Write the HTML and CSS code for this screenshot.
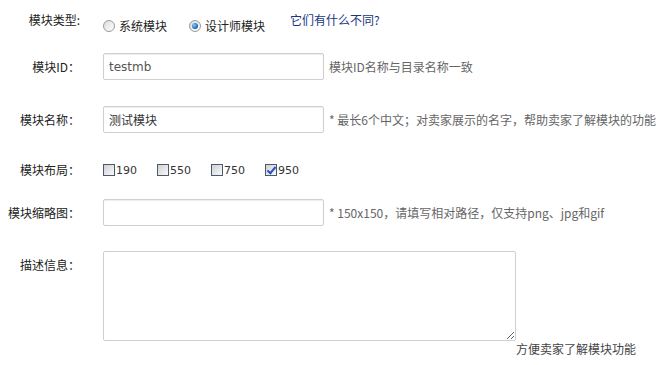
FILE: index.html
```html
<!DOCTYPE html>
<html lang="zh-CN">
<head>
    <meta charset="UTF-8">
    <title>模块信息</title>
    <link rel="stylesheet" href="styles.css">
</head>
<body>
    <form class="module-form">
        <!-- 模块类型 -->
        <div class="row row-type">
            <label class="field-label">模块类型:</label>
            <div class="options">
                <label class="radio"><input type="radio" name="type">系统模块</label>
                <label class="radio"><input type="radio" name="type" checked>设计师模块</label>
            </div>
            <a class="diff-link" href="#">它们有什么不同?</a>
        </div>

        <div class="row row-id">
            <label class="field-label">模块ID：</label>
            <input class="text-input latin" type="text" value="testmb">
            <span class="hint">模块ID名称与目录名称一致</span>
        </div>

        <div class="row row-name">
            <label class="field-label">模块名称：</label>
            <input class="text-input" type="text" value="测试模块">
            <span class="hint">* 最长6个中文；对卖家展示的名字，帮助卖家了解模块的功能</span>
        </div>

        <!-- 布局宽度 -->
        <div class="row row-layout">
            <label class="field-label">模块布局：</label>
            <div class="checks">
                <label class="check"><input type="checkbox">190</label>
                <label class="check"><input type="checkbox">550</label>
                <label class="check"><input type="checkbox">750</label>
                <label class="check"><input type="checkbox" checked>950</label>
            </div>
        </div>

        <div class="row row-thumb">
            <label class="field-label">模块缩略图：</label>
            <input class="text-input" type="text">
            <span class="hint">* 150x150，请填写相对路径，仅支持png、jpg和gif</span>
        </div>

        <div class="row row-desc">
            <label class="field-label">描述信息：</label>
            <div class="desc-box">
                <textarea class="desc-input"></textarea>
                <div class="desc-hint">方便卖家了解模块功能</div>
            </div>
        </div>
    </form>
</body>
</html>
```

FILE: styles.css
```css
body {
    margin: 0;
    background: #fff;
    color: #222;
    font-family: "Noto Sans CJK SC", "DejaVu Sans", sans-serif;
    font-size: 12px;
    overflow: hidden;
    width: 670px;
}
.module-form {
    padding-top: 12px;
}
.row {
    display: flex;
    align-items: center;
    white-space: nowrap;
}
.field-label {
    width: 80px;
    margin-right: 23px;
    text-align: right;
    line-height: 16px;
    flex-shrink: 0;
}

/* 模块类型 */
.row-type {
    align-items: flex-start;
    height: 28px;
}
.options {
    display: flex;
    margin-top: 6px;
    line-height: 16px;
}
.radio {
    display: flex;
    align-items: center;
    margin-right: 22px;
    font-size: 12px;
}
.radio input {
    appearance: none;
    width: 12px;
    height: 12px;
    margin: 0 4px 0 0;
    border: 1px solid #9a9a9a;
    border-radius: 50%;
    background: linear-gradient(135deg, #dcdcdc, #fff);
    position: relative;
}
.radio input:checked::after {
    content: "";
    position: absolute;
    left: 2px;
    top: 2px;
    width: 6px;
    height: 6px;
    border-radius: 50%;
    background: radial-gradient(circle at 35% 35%, #7fd0ff, #1a5cb0 70%);
}
.diff-link {
    margin-left: 3px;
    line-height: 16px;
    color: #17367f;
    text-decoration: none;
}

/* 输入框 */
.text-input {
    width: 221px;
    height: 27px;
    box-sizing: border-box;
    margin: 0;
    padding: 0 5px;
    border: 1px solid #cfcfcf;
    border-radius: 2px;
    box-shadow: inset 0 1px 1px #eee;
    font-family: "Noto Sans CJK SC", sans-serif;
    font-size: 12px;
    color: #333;
}
.text-input.latin {
    font-family: "DejaVu Sans", sans-serif;
    color: #555;
}
.hint {
    margin-left: 5px;
    color: #666;
}
.row-id {
    margin-top: 13px;
}
.row-name {
    margin-top: 26px;
}

/* 布局 */
.row-layout {
    margin-top: 26px;
    height: 22px;
}
.checks {
    display: flex;
}
.check {
    display: flex;
    align-items: center;
    width: 54px;
    font-family: "DejaVu Sans", sans-serif;
    font-size: 11px;
    color: #333;
}
.check input {
    appearance: none;
    width: 12px;
    height: 12px;
    margin: 0 1px 0 0;
    border: 1px solid #4a5a6e;
    background: linear-gradient(135deg, #d0d0d0, #fafafa);
    position: relative;
}
.check input:checked::after {
    content: "";
    position: absolute;
    left: 3px;
    top: 0;
    width: 3px;
    height: 7px;
    border: solid #2a4fc8;
    border-width: 0 2px 2px 0;
    transform: rotate(40deg);
}
.row-thumb {
    margin-top: 18px;
}

/* 描述 */
.row-desc {
    margin-top: 25px;
    align-items: flex-start;
}
.row-desc .field-label {
    margin-top: 6px;
}
.desc-input {
    display: block;
    width: 413px;
    height: 90px;
    box-sizing: border-box;
    margin: 0;
    border: 1px solid #cfcfcf;
    border-radius: 2px;
}
.desc-hint {
    margin-left: 413px;
    line-height: 16px;
    color: #444;
}
```
